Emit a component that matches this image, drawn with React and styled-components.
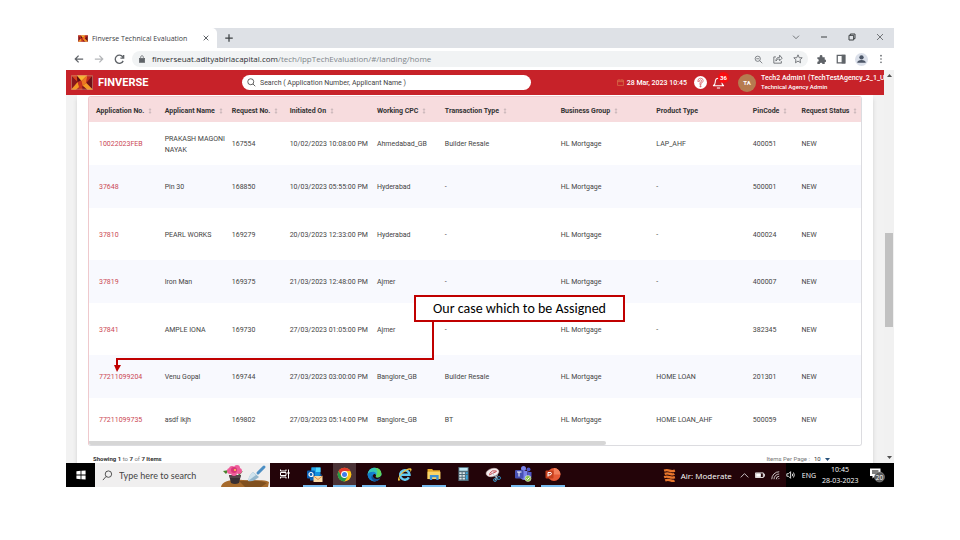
import React from "react";
import styled, { createGlobalStyle, css } from "styled-components";

const GlobalStyle = createGlobalStyle`
  *, *::before, *::after { box-sizing: border-box; }
  body { margin: 0; background: #fff; font-family: Roboto, "Liberation Sans", sans-serif; color: #333; }
  button, input, select { font: inherit; color: inherit; margin: 0; padding: 0; border: 0; background: none; }
  button { display: inline-flex; align-items: center; justify-content: center; }
  svg { display: block; flex: none; }
`;

const Slide = styled.main`
  position: relative;
  padding: 28px 66px 53px;
`;

const Screen = styled.div`
  display: flex;
  flex-direction: column;
`;

/* Browser chrome */
const TabStrip = styled.header`
  display: flex;
  align-items: stretch;
  height: 20px;
  background: #dee1e6;
  color: #3c4043;
`;
const Tab = styled.div`
  display: flex;
  align-items: center;
  gap: 4px;
  width: 151px;
  padding: 0 4px 0 12px;
  background: #fff;
  border-radius: 0 5px 0 0;
  font: 7px "Open Sans", "Noto Sans", sans-serif;
  white-space: nowrap;
`;
const TabTitle = styled.span`
  flex: 1;
`;
const NewTab = styled.button`
  width: 24px;
`;
const WindowControls = styled.div`
  display: flex;
  align-items: center;
  gap: 12px;
  margin-left: auto;
  padding: 0 6px 3px 0;
`;
const WindowButton = styled.button`
  width: 16px;
  height: 14px;
`;

const Toolbar = styled.div`
  display: flex;
  align-items: center;
  gap: 6px;
  height: 22px;
  padding: 0 6px;
  background: #fff;
  color: #5f6368;
`;
const ToolButton = styled.button`
  width: 14px;
  height: 14px;
  color: ${(p) => (p.$faded ? "#b4b6b9" : "#5f6368")};
`;
const AddressBar = styled.div`
  display: flex;
  align-items: center;
  gap: 6px;
  flex: 1;
  height: 16px;
  padding: 0 3px 0 6px;
  border-radius: 8px;
  background: #f1f3f4;
`;
const AddressText = styled.span`
  flex: 1;
  font: 8px/14px "Open Sans", "Noto Sans", sans-serif;
  color: #80868b;
  white-space: nowrap;
  b { font-weight: 400; color: #2c2e31; }
`;

/* Application */
const Viewport = styled.div`
  display: grid;
  grid-template-columns: 1fr 10px;
`;
const Page = styled.div`
  display: flex;
  flex-direction: column;
  min-width: 0;
  background: #f2f2f2;
`;
const AppBar = styled.div`
  display: grid;
  grid-template-columns: 171px 289px 1fr auto;
  align-items: center;
  height: 25px;
  padding-left: 5px;
  background: #c72229;
  color: #fff;
`;
const Brand = styled.h1`
  display: flex;
  align-items: center;
  gap: 5px;
  margin: 0;
  font: 700 11px Roboto, sans-serif;
`;
const SearchField = styled.label`
  display: flex;
  align-items: center;
  gap: 4px;
  width: 100%;
  height: 15px;
  padding: 0 5px;
  border-radius: 8px;
  background: #fff;
  color: #333;
`;
const SearchInput = styled.input`
  flex: 1;
  min-width: 0;
  font: 7px Roboto, sans-serif;
  outline: 0;
  &::placeholder { color: #444; opacity: 1; }
`;
const Clock = styled.time`
  display: flex;
  align-items: center;
  justify-content: flex-end;
  gap: 3px;
  padding-right: 4px;
  font-size: 7px;
  font-weight: 500;
  white-space: nowrap;
`;
const Account = styled.div`
  display: flex;
  align-items: center;
  width: 193px;
`;
const HeaderButton = styled.button`
  position: relative;
  flex: none;
  width: 18px;
  height: 16px;
`;
const Badge = styled.span`
  position: absolute;
  top: -3px;
  right: -2px;
  width: 11px;
  height: 11px;
  border-radius: 50%;
  background: #f90d10;
  font: 700 6px/11px Roboto, sans-serif;
  text-align: center;
`;
const Avatar = styled.span`
  flex: none;
  width: 18px;
  height: 18px;
  margin: 0 5px 0 11px;
  border-radius: 50%;
  background: #b67b50;
  font: 700 6px/18px Roboto, sans-serif;
  text-align: center;
`;
const UserText = styled.p`
  margin: 0;
  font: 500 7px/9px Roboto, sans-serif;
  white-space: nowrap;
  small { display: block; font-size: 6px; line-height: 8px; }
`;
const Sheet = styled.section`
  margin: 0 11px;
  padding: 1px 11px 0;
  background: #fff;
  box-shadow: 0 4px 4px #d0d0d0;
`;
const TableFrame = styled.div`
  border: 1px solid #dcdce0;
  border-left-color: #efc9cd;
  border-top-color: #efc9cd;
  border-radius: 3px;
  overflow: hidden;
`;
const Table = styled.table`
  width: 100%;
  table-layout: fixed;
  border-collapse: collapse;
  font-size: 7px;
`;
const Column = styled.col`
  width: ${(p) => p.$share}%;
`;
const HeadCell = styled.th`
  height: 25px;
  padding: 2px 0 0;
  background: #f7dcde;
  color: #333;
  font-weight: 700;
  text-align: left;
  white-space: nowrap;
  &:first-child { padding-left: 7px; }
`;
const SortButton = styled.button`
  gap: 4px;
`;
const Row = styled.tr`
  height: ${(p) => (p.$tall ? 52 : 43)}px;
  background: ${(p) => (p.$striped ? "#f8f9fe" : "#fff")};
`;
const Cell = styled.td`
  padding: 2px 0 0;
  color: #444;
  line-height: 11px;
  &:first-child { padding-left: 10px; }
  ${(p) => p.$nowrap && css`white-space: nowrap;`}
`;
const CaseLink = styled.a`
  color: #cb4854;
  text-decoration: none;
`;
const ScrollTrack = styled.div`
  height: 4px;
  background: #fff;
`;
const ScrollThumb = styled.div`
  width: 67%;
  height: 4px;
  border-radius: 0 2px 2px 0;
  background: #d6d6d6;
`;
const TableFooter = styled.footer`
  display: flex;
  align-items: center;
  justify-content: space-between;
  height: 17px;
  padding: 9px 32px 0 5px;
  font-size: 6px;
  line-height: 8px;
  color: #777;
  b { color: #333; }
`;
const PageSize = styled.label`
  display: flex;
  align-items: center;
  gap: 4px;
`;
const SelectWrap = styled.span`
  display: flex;
  align-items: center;
  gap: 3px;
  color: #333;
`;
const Select = styled.select`
  appearance: none;
  width: 8px;
  font-size: 6px;
  line-height: 8px;
`;
const PageScrollbar = styled.div`
  display: flex;
  flex-direction: column;
  align-items: center;
  padding: 4px 0;
  background: #f1f1f1;
  color: #505050;
`;
const PageThumb = styled.div`
  width: 8px;
  height: 94px;
  margin: 156px 0 auto;
  background: #c1c1c1;
`;

/* Taskbar */
const Taskbar = styled.nav`
  display: flex;
  align-items: stretch;
  height: 24px;
  background: linear-gradient(90deg, #230409 87%, #000 87%);
  color: #fff;
  font-family: "Open Sans", "Noto Sans", sans-serif;
`;
const StartButton = styled.button`
  width: 29px;
  background: #000;
`;
const TaskSearch = styled.label`
  display: flex;
  align-items: center;
  gap: 6px;
  width: 175px;
  padding-left: 7px;
  background: #f0efef;
  color: #444;
`;
const TaskSearchInput = styled.input`
  flex: 1;
  min-width: 0;
  font: 9px Lato, sans-serif;
  outline: 0;
  &::placeholder { color: #444; opacity: 1; }
`;
const TaskIcons = styled.div`
  display: grid;
  grid-template-columns: repeat(10, 1fr);
  width: 298px;
`;
const TaskButton = styled.button`
  margin: 0 3px;
  border-bottom: 2px solid ${(p) => (p.$open ? "#76b9ed" : "transparent")};
  background: ${(p) => (p.$active ? "#4b3337" : "transparent")};
`;
const Tray = styled.div`
  display: flex;
  align-items: center;
  gap: 6px;
  margin-left: auto;
  padding-right: 9px;
  font-size: 7px;
  white-space: nowrap;
`;
const Weather = styled.span`
  display: flex;
  align-items: center;
  gap: 5px;
  margin-right: 2px;
  font-size: 8px;
`;
const TrayClock = styled.time`
  width: 36px;
  margin-right: 5px;
  line-height: 11px;
  text-align: center;
`;

/* Callout drawn over the screen */
const Callout = styled.p`
  position: absolute;
  left: 414px;
  top: 295px;
  width: 211px;
  margin: 0;
  border: 2px solid #c00000;
  background: #fff;
  color: #000;
  font: 14px/23px Carlito, Lato, sans-serif;
  text-align: center;
  white-space: nowrap;
`;
const Connector = styled.svg`
  position: absolute;
  left: 112px;
  top: 321px;
`;

function Icon({ size = 10, h, box = "0 0 24 24", sw = 2, children }) {
  return (
    <svg width={size} height={h || size} viewBox={box} fill="none" stroke="currentColor" strokeWidth={sw} aria-hidden="true">
      {children}
    </svg>
  );
}

const Logo = ({ w, h }) => (
  <svg width={w} height={h} viewBox="0 0 23 15" aria-hidden="true">
    <rect width="23" height="15" fill="#a91f20" />
    <path d="M0 0 7 7 0 15Z" fill="#8a171b" />
    <path d="M0 0H6L7 7Z" fill="#d6431f" />
    <path d="M6 0 11 6 7 9Z" fill="#5e0e14" />
    <path d="M0 15 7 7 9 12 5 15Z" fill="#f39a24" />
    <path d="M7 7 11 5 12 15H9Z" fill="#c8321f" />
    <path d="M6 0H17L11 6Z" fill="#f7b52f" />
    <path d="M11 6 17 0 16 8 12 11Z" fill="#ec7622" />
    <path d="M17 0H23L16 8Z" fill="#be281f" />
    <path d="M23 0V15L16 8Z" fill="#6c1118" />
    <path d="M16 8 23 15H17L12 11Z" fill="#f39a24" />
    <path d="M12 11 17 15H12Z" fill="#7d1419" />
    <rect x=".5" y=".5" width="22" height="14" fill="none" stroke="#dd9a86" strokeOpacity=".6" />
  </svg>
);

const Garden = () => (
  <svg width="50" height="24" viewBox="0 0 48 24" aria-hidden="true">
    <path d="M0 24C1 18 10 16 22 17S43 16 48 19L47 24Z" fill="#a66a2c" />
    <path d="M18 18C28 17 39 17 46 20L40 24H24Z" fill="#80501f" />
    <path d="M5 11 2 8 8 7ZM17 10 22 8 18 13Z" fill="#49822d" />
    <path d="M8 12H20L18 20Q14 22 10 20Z" fill="#382f32" />
    <path d="M8 12H20L19 15H9Z" fill="#554448" />
    <g fill="#ee5d9a"><circle cx="9" cy="8" r="3" /><circle cx="18" cy="8" r="3" /><circle cx="11" cy="6" r="3" /><circle cx="16" cy="5" r="3" /><circle cx="13" cy="10" r="3" /></g>
    <circle cx="13" cy="7" r="3" fill="#d93578" /><circle cx="14" cy="7" r="1" fill="#ffd34f" />
    <path d="M43 4 37 10" stroke="#4c8fc4" strokeWidth="3" strokeLinecap="round" />
    <path d="M32 9 38 14 34 17Q30 19 27 18 28 12 32 9Z" fill="#93b6cc" />
    <path d="M32 9 35 12 27 18Q28 12 32 9Z" fill="#cfe3ee" />
  </svg>
);

const Outlook = () => (
  <svg width="17" height="17" viewBox="0 0 34 34" aria-hidden="true">
    <path d="M11 3H29V24H11Z" fill="#1490df" /><path d="M20 3H29V12H20Z" fill="#50d9ff" /><path d="M11 3H20V12H11Z" fill="#28a8ea" />
    <path d="M8 16 20 23 31 16V29H8Z" fill="#0f64b5" />
    <rect x="2" y="9" width="16" height="16" rx="2" fill="#0a5fb4" /><circle cx="10" cy="17" r="4" fill="none" stroke="#fff" strokeWidth="2.4" />
    <path d="M15 20H33V32H15Z" fill="#fbd9a5" /><path d="M15 20 24 27 33 20" fill="none" stroke="#d98032" strokeWidth="1.6" />
  </svg>
);
const Chrome = () => (
  <svg width="15" height="15" viewBox="0 0 48 48" aria-hidden="true">
    <circle cx="24" cy="24" r="22" fill="#fbc116" />
    <path d="M5 13A22 22 0 0 1 43 13H24L14 30Z" fill="#e33b2e" />
    <path d="M5 13 14 30 34 30 24 46A22 22 0 0 1 5 13Z" fill="#269b49" />
    <circle cx="24" cy="24" r="11" fill="#fff" /><circle cx="24" cy="24" r="8" fill="#3f7de8" />
  </svg>
);
const Edge = () => (
  <svg width="15" height="15" viewBox="0 0 48 48" aria-hidden="true">
    <circle cx="24" cy="24" r="22" fill="#1583d2" />
    <path d="M2 24C3 10 13 2 24 2 37 2 46 11 46 22 46 30 40 34 33 34 28 34 26 31 29 28 32 20 26 15 19 15 11 15 5 19 2 24Z" fill="#37c6b6" />
    <path d="M25 2C38 2 46 11 46 22 46 30 40 34 33 34 28 34 26 31 29 28 33 18 38 12 25 2Z" fill="#62d65b" />
    <path d="M17 17C11 25 14 40 29 45 15 49 2 37 2 24 5 19 10 16 17 17Z" fill="#137cc7" />
    <path d="M18 25C16 37 29 42 42 36 37 45 27 48 20 43 13 38 12 30 18 25Z" fill="#114d91" />
    <path d="M29 28C26 31 28 34 33 34 38 34 42 32 44 29L46 32 42 36C29 42 17 35 19 26 22 21 27 20 29 28Z" fill="#230409" />
  </svg>
);
const Explorer = () => (
  <svg width="15" height="15" viewBox="0 0 48 48" aria-hidden="true">
    <path d="M38 33A15 15 0 1 1 40 25H14" fill="none" stroke="#64c9f0" strokeWidth="8" />
    <path d="M4 44C-2 33 25 3 43 4 50 5 45 14 42 17 45 8 39 7 29 12 14 22 2 35 11 42Z" fill="#f4c63e" />
  </svg>
);
const Folder = () => (
  <svg width="14" height="12" viewBox="0 0 30 26" aria-hidden="true">
    <path d="M1 2H11L13 5H28V24H1Z" fill="#e7a928" /><path d="M1 8H29V24H1Z" fill="#fad467" />
    <path d="M6 15H25V26H20V20H11V26H6Z" fill="#3c91d4" />
  </svg>
);
const Calculator = () => (
  <svg width="11" height="14" viewBox="0 0 22 30" aria-hidden="true">
    <rect width="22" height="30" fill="#526d7a" /><rect x="2" y="2" width="18" height="6" fill="#c2e9f6" />
    <g fill="#dde6e9"><path d="M2 11H7V15H2ZM9 11H14V15H9ZM2 17H7V21H2ZM9 17H14V21H9ZM2 23H7V27H2ZM9 23H14V27H9Z" /></g>
    <path d="M16 11H20V15H16ZM16 17H20V27H16Z" fill="#37a6df" />
  </svg>
);
const Snip = () => (
  <svg width="16" height="15" viewBox="0 0 32 30" aria-hidden="true">
    <ellipse cx="15" cy="11" rx="13" ry="8" transform="rotate(-15 15 11)" fill="#f5eeee" stroke="#d8c3c3" />
    <path d="M9 13Q14 5 23 8M8 16 23 9" fill="none" stroke="#c4474f" strokeWidth="2" />
    <path d="M15 13 27 26M25 15 20 27" stroke="#b8ced8" strokeWidth="2" />
    <g fill="none" stroke="#3187b5" strokeWidth="2"><circle cx="20" cy="26" r="3" /><circle cx="28" cy="22" r="3" /></g>
  </svg>
);
const Teams = () => (
  <svg width="17" height="16" viewBox="0 0 34 32" aria-hidden="true">
    <circle cx="17" cy="5" r="5" fill="#7b83eb" /><circle cx="27" cy="7" r="4" fill="#5059c9" />
    <path d="M11 10H25V26Q16 31 11 24Z" fill="#7b83eb" /><path d="M25 12H33V22Q31 28 25 26Z" fill="#5059c9" />
    <rect y="8" width="17" height="17" rx="2" fill="#4650b2" /><path d="M4 12H13M8 12V21" stroke="#fff" strokeWidth="2" />
    <circle cx="26" cy="25" r="6" fill="#8bc34a" stroke="#fff" /><path d="M23 25 25 27 29 23" fill="none" stroke="#fff" strokeWidth="2" />
  </svg>
);
const PowerPoint = () => (
  <svg width="16" height="15" viewBox="0 0 32 30" aria-hidden="true">
    <circle cx="18" cy="15" r="13" fill="#e65a36" /><path d="M18 2A13 13 0 0 1 31 15H18Z" fill="#f3805c" />
    <rect x="1" y="7" width="16" height="16" rx="2" fill="#c43e1c" /><path d="M6 19V11H10Q13 11 13 13T10 16H6" fill="none" stroke="#fff" strokeWidth="2" />
  </svg>
);
const TaskView = () => (
  <Icon size={12}><path d="M3 3V6H14V3M3 21V18H14V21M3 9H14V15H3ZM19 3V21" /><path d="M17 8H21V12H17Z" fill="currentColor" stroke="none" /></Icon>
);

const SortIcon = () => (
  <svg width="4" height="6" viewBox="0 0 8 12" fill="#cdb9bc" aria-hidden="true"><path d="M4 0 7 4H1ZM4 12 7 8H1ZM3 4H5V8H3Z" /></svg>
);
const Caret = ({ up, color = "currentColor" }) => (
  <svg width="5" height="3" viewBox="0 0 10 6" fill={color} aria-hidden="true"><path d={up ? "M5 0 10 6H0Z" : "M0 0H10L5 6Z"} /></svg>
);

const columns = [
  ["Application No.", 9.8, true],
  ["Applicant Name", 8.7, true],
  ["Request No.", 7.5, true],
  ["Initiated On", 11.3, true],
  ["Working CPC", 8.8, true],
  ["Transaction Type", 15, true],
  ["Business Group", 12.4, true],
  ["Product Type", 12.5, false],
  ["PinCode", 6.3, true],
  ["Request Status", 7.7, true],
];

const rows = [
  ["10022023FEB", "PRAKASH MAGONI NAYAK", "167554", "10/02/2023 10:08:00 PM", "Ahmedabad_GB", "Builder Resale", "HL Mortgage", "LAP_AHF", "400051", "NEW"],
  ["37648", "Pin 30", "168850", "10/03/2023 05:55:00 PM", "Hyderabad", "-", "HL Mortgage", "-", "500001", "NEW"],
  ["37810", "PEARL WORKS", "169279", "20/03/2023 12:33:00 PM", "Hyderabad", "-", "HL Mortgage", "-", "400024", "NEW"],
  ["37819", "Iron Man", "169375", "21/03/2023 12:48:00 PM", "Ajmer", "-", "HL Mortgage", "-", "400007", "NEW"],
  ["37841", "AMPLE IONA", "169730", "27/03/2023 01:05:00 PM", "Ajmer", "-", "HL Mortgage", "-", "382345", "NEW"],
  ["77211099204", "Venu Gopal", "169744", "27/03/2023 03:00:00 PM", "Banglore_GB", "Builder Resale", "HL Mortgage", "HOME LOAN", "201301", "NEW"],
  ["77211099735", "asdf lkjh", "169802", "27/03/2023 05:14:00 PM", "Banglore_GB", "BT", "HL Mortgage", "HOME LOAN_AHF", "500059", "NEW"],
];
const tallRows = [2, 4];

const apps = [
  ["Task View", TaskView, false],
  ["Outlook", Outlook, true],
  ["Chrome", Chrome, true, true],
  ["Edge", Edge, true],
  ["Internet Explorer", Explorer, false],
  ["File Explorer", Folder, true],
  ["Calculator", Calculator, false],
  ["Snipping Tool", Snip, false],
  ["Teams", Teams, true],
  ["PowerPoint", PowerPoint, true],
];

function BrowserChrome() {
  return (
    <>
      <TabStrip>
        <Tab>
          <Logo w={10} h={7} />
          <TabTitle>Finverse Technical Evaluation</TabTitle>
          <ToolButton aria-label="Close tab"><Icon size={8} sw={3}><path d="M5 5 19 19M19 5 5 19" /></Icon></ToolButton>
        </Tab>
        <NewTab aria-label="New tab"><Icon size={10} sw={3}><path d="M12 3V21M3 12H21" /></Icon></NewTab>
        <WindowControls>
          <WindowButton aria-label="Tab search"><Icon size={8}><path d="M3 8 12 17 21 8" /></Icon></WindowButton>
          <WindowButton aria-label="Minimize"><Icon size={8} sw={3}><path d="M3 12H21" /></Icon></WindowButton>
          <WindowButton aria-label="Restore"><Icon size={8} sw={3}><path d="M3 7H17V21H3ZM7 7V3H21V17H17" /></Icon></WindowButton>
          <WindowButton aria-label="Close"><Icon size={8}><path d="M3 3 21 21M21 3 3 21" /></Icon></WindowButton>
        </WindowControls>
      </TabStrip>
      <Toolbar>
        <ToolButton aria-label="Back"><Icon size={10} sw={3}><path d="M22 12H3M11 4 3 12 11 20" /></Icon></ToolButton>
        <ToolButton aria-label="Forward" $faded><Icon size={10} sw={3}><path d="M2 12H21M13 4 21 12 13 20" /></Icon></ToolButton>
        <ToolButton aria-label="Reload"><Icon size={11} sw={3}><path d="M20 15A9 9 0 1 1 19 6L21 9M21 2V9H14" /></Icon></ToolButton>
        <AddressBar>
          <Icon size={8}><rect x="4" y="10" width="16" height="12" fill="currentColor" /><path d="M8 10V6A4 4 0 0 1 16 6V10" /></Icon>
          <AddressText><b>finverseuat.adityabirlacapital.com</b>/tech/lppTechEvaluation/#/landing/home</AddressText>
          <ToolButton aria-label="Zoom"><Icon size={9}><circle cx="10" cy="10" r="7" /><path d="M15 15 22 22M6 10H14" /></Icon></ToolButton>
          <ToolButton aria-label="Share"><Icon size={10}><path d="M7 7H2V22H20V17M7 17C7 10 11 8 16 8V3L22 10 16 16V12C12 12 9 13 7 17Z" /></Icon></ToolButton>
          <ToolButton aria-label="Bookmark"><Icon size={10}><path d="M12 2 15 9 22 9 17 14 18 21 12 17 6 21 7 14 2 9 9 9Z" /></Icon></ToolButton>
        </AddressBar>
        <ToolButton aria-label="Extensions"><Icon size={11}><path d="M3 7H8V5A3 3 0 0 1 14 5V7H19V12A3 3 0 0 1 19 18V22H14A3 3 0 0 0 8 22H3V17A3 3 0 0 0 3 11Z" fill="currentColor" stroke="none" /></Icon></ToolButton>
        <ToolButton aria-label="Side panel"><Icon size={10} sw={3}><path d="M3 3H21V21H3Z" /><path d="M15 3H21V21H15Z" fill="currentColor" /></Icon></ToolButton>
        <ToolButton aria-label="Profile"><Icon size={13}><circle cx="12" cy="12" r="12" fill="#dbe0ea" stroke="none" /><circle cx="12" cy="8" r="4" fill="#4b5566" stroke="none" /><path d="M4 18Q5 13 12 13T20 18Z" fill="#4b5566" stroke="none" /></Icon></ToolButton>
        <ToolButton aria-label="Menu"><Icon size={10}><g fill="currentColor" stroke="none"><circle cx="12" cy="4" r="2" /><circle cx="12" cy="12" r="2" /><circle cx="12" cy="20" r="2" /></g></Icon></ToolButton>
      </Toolbar>
    </>
  );
}

function ApplicationHeader() {
  return (
    <AppBar>
      <Brand><Logo w={22} h={15} />FINVERSE</Brand>
      <SearchField>
        <Icon size={9} sw={2}><circle cx="10" cy="10" r="8" /><path d="M16 16 22 22" /></Icon>
        <SearchInput aria-label="Search" placeholder="Search ( Application Number, Applicant Name )" />
      </SearchField>
      <Clock dateTime="2023-03-28T10:45">
        <Icon size={7} sw={2}><g stroke="#df8a55"><path d="M2 4H22V22H2ZM2 9H22M7 1V5M17 1V5" /></g></Icon>
        28 Mar, 2023 10:45
      </Clock>
      <Account>
        <HeaderButton aria-label="Help">
          <Icon size={13} sw={2}><circle cx="12" cy="12" r="12" fill="#fff" stroke="none" /><path d="M7 10Q7 4 12 4T17 9Q17 12 13 13V16H11V12Q14 11 14 9T12 7 10 10ZM11 18H13V20H11Z" stroke="#c72229" strokeWidth="1" /></Icon>
        </HeaderButton>
        <HeaderButton aria-label="Notifications">
          <Icon size={13} sw={2}><path d="M2 18Q6 16 6 11 6 4 12 4T18 11Q18 16 22 18ZM9 22H15" /></Icon>
          <Badge>36</Badge>
        </HeaderButton>
        <Avatar>TA</Avatar>
        <UserText>Tech2 Admin1 (TechTestAgency_2_1_U<small>Technical Agency Admin</small></UserText>
      </Account>
    </AppBar>
  );
}

function CaseTable() {
  return (
    <TableFrame>
      <Table>
        <colgroup>{columns.map(([name, share]) => <Column key={name} $share={share} />)}</colgroup>
        <thead>
          <tr>
            {columns.map(([name, , sortable]) => (
              <HeadCell key={name} scope="col">
                {sortable ? <SortButton>{name}<SortIcon /></SortButton> : name}
              </HeadCell>
            ))}
          </tr>
        </thead>
        <tbody>
          {rows.map((row, r) => (
            <Row key={row[0]} $tall={tallRows.includes(r)} $striped={r % 2 === 1}>
              {row.map((value, c) => (
                <Cell key={c} $nowrap={c !== 1}>{c === 0 ? <CaseLink href="#case">{value}</CaseLink> : value}</Cell>
              ))}
            </Row>
          ))}
        </tbody>
      </Table>
      <ScrollTrack><ScrollThumb /></ScrollTrack>
    </TableFrame>
  );
}

function WindowsTaskbar() {
  return (
    <Taskbar>
      <StartButton aria-label="Start"><Icon size={10}><path d="M1 3 11 2V11H1ZM13 2 23 1V11H13ZM1 13H11V22L1 21ZM13 13H23V23L13 22Z" fill="#fff" stroke="none" /></Icon></StartButton>
      <TaskSearch>
        <Icon size={11} sw={2}><circle cx="14" cy="9" r="7" /><path d="M9 14 2 22" /></Icon>
        <TaskSearchInput aria-label="Type here to search" placeholder="Type here to search" />
        <Garden />
      </TaskSearch>
      <TaskIcons>
        {apps.map(([name, Glyph, open, active]) => (
          <TaskButton key={name} aria-label={name} $open={open} $active={active}><Glyph /></TaskButton>
        ))}
      </TaskIcons>
      <Tray>
        <Weather>
          <Icon size={13} sw={4}><g stroke="#e8762c"><path d="M2 3Q7 1 12 3T22 3M3 9Q8 7 13 9T21 9M2 15Q7 13 12 15T22 15M4 21Q9 19 14 21T21 21" /></g></Icon>
          Air: Moderate
        </Weather>
        <Icon size={9}><path d="M2 17 12 7 22 17" /></Icon>
        <Icon size={10}><path d="M1 7H20V18H1ZM20 10H23V15H20" /><path d="M3 9H13V16H3Z" fill="currentColor" /></Icon>
        <Icon size={9}><path d="M2 22A20 20 0 0 1 22 2M8 22A14 14 0 0 1 22 8M14 22A8 8 0 0 1 22 14M19 22 22 19" /></Icon>
        <Icon size={10}><path d="M2 9H6L11 4V20L6 15H2ZM15 9Q17 12 15 15M18 6Q22 12 18 18" /></Icon>
        ENG
        <TrayClock dateTime="2023-03-28T10:45">10:45<br />28-03-2023</TrayClock>
        <svg width="16" height="16" viewBox="0 0 32 32" role="img" aria-label="20 notifications">
          <path d="M2 3H23V18H12L7 23V18H2Z" fill="#fff" /><path d="M6 8H19M6 12H19" stroke="#000" strokeWidth="2" />
          <circle cx="21" cy="20" r="10" fill="#5a5a5a" stroke="#aaa" /><text x="21" y="25" textAnchor="middle" fill="#fff" fontSize="13" fontFamily="Open Sans">20</text>
        </svg>
      </Tray>
    </Taskbar>
  );
}

export default function App() {
  return (
    <Slide>
      <GlobalStyle />
      <Screen>
        <BrowserChrome />
        <Viewport>
          <Page>
            <ApplicationHeader />
            <Sheet>
              <CaseTable />
              <TableFooter>
                <span><b>Showing 1</b> to <b>7</b> of <b>7 Items</b></span>
                <PageSize>
                  Items Per Page :
                  <SelectWrap>
                    <Select defaultValue="10"><option>10</option><option>25</option></Select>
                    <Caret color="#27517a" />
                  </SelectWrap>
                </PageSize>
              </TableFooter>
            </Sheet>
          </Page>
          <PageScrollbar><Caret up /><PageThumb /><Caret /></PageScrollbar>
        </Viewport>
        <WindowsTaskbar />
      </Screen>
      <Connector width="323" height="53" viewBox="0 0 323 53" fill="none" aria-hidden="true">
        <path d="M321 0V38H5V46" stroke="#c00000" strokeWidth="2" />
        <path d="M2 44H9L5 51Z" fill="#c00000" />
      </Connector>
      <Callout>Our case which to be Assigned</Callout>
    </Slide>
  );
}
